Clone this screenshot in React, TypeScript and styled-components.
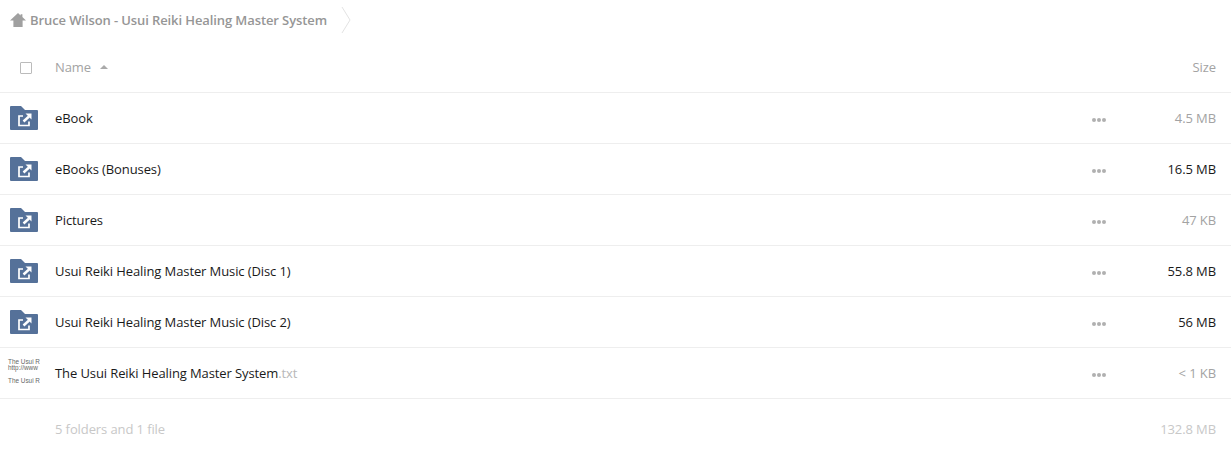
import React from "react";
import styled, { createGlobalStyle } from "styled-components";

const GlobalStyle = createGlobalStyle`
  html, body {
    margin: 0;
    padding: 0;
    background: #fff;
    font-family: "Open Sans", "Liberation Sans", sans-serif;
    font-size: 13px;
    letter-spacing: -0.1px;
  }
`;

type Item = {
  name: string;
  ext?: string;
  size: string;
  muted?: boolean;
};

const items: Item[] = [
  { name: "eBook", size: "4.5 MB", muted: true },
  { name: "eBooks (Bonuses)", size: "16.5 MB" },
  { name: "Pictures", size: "47 KB", muted: true },
  { name: "Usui Reiki Healing Master Music (Disc 1)", size: "55.8 MB" },
  { name: "Usui Reiki Healing Master Music (Disc 2)", size: "56 MB" },
  {
    name: "The Usui Reiki Healing Master System",
    ext: ".txt",
    size: "< 1 KB",
    muted: true,
  },
];

const HomeIcon = () => (
  <svg width="16" height="14" viewBox="0 0 16 14">
    <path
      d="M8 0 L10.6 2.4 V1.2 H12.4 V4.1 L16 7.6 H12.6 V14 H3.4 V7.6 H0 Z"
      fill="#a0a0a0"
    />
  </svg>
);

const SharedFolderIcon = () => (
  <svg width="28" height="24" viewBox="0 0 28 24">
    <path
      d="M1 0 H11 L15 4 H27 a1 1 0 0 1 1 1 V23 a1 1 0 0 1 -1 1 H1 a1 1 0 0 1 -1 -1 V1 a1 1 0 0 1 1 -1 Z"
      fill="#557199"
    />
    <path
      d="M13 10 H9 V19.5 H19 V15.5"
      fill="none"
      stroke="#fff"
      strokeWidth="1.7"
    />
    <path d="M13.5 15.5 L19 10.5" fill="none" stroke="#fff" strokeWidth="2.5" />
    <path d="M15.5 7.5 H21.5 V13.5 Z" fill="#fff" />
  </svg>
);

const App = () => {
  return (
    <Page>
      <GlobalStyle />
      <Breadcrumb>
        <HomeIcon />
        <CrumbLabel>Bruce Wilson - Usui Reiki Healing Master System</CrumbLabel>
        <CrumbChevron width="10" height="28" viewBox="0 0 10 28">
          <path d="M1 1 L9 14 L1 27" fill="none" stroke="#e3e3e3" />
        </CrumbChevron>
      </Breadcrumb>
      <HeaderRow>
        <CheckCell>
          <Checkbox />
        </CheckCell>
        <NameHeader>
          Name
          <SortArrow />
        </NameHeader>
        <SizeHeader>Size</SizeHeader>
      </HeaderRow>
      {items.map((item) => (
        <Row key={item.name}>
          <IconCell>
            {item.ext ? (
              <Thumb>
                <ThumbLine>The Usui R</ThumbLine>
                <ThumbLine>http://www</ThumbLine>
                <ThumbGap />
                <ThumbLine>The Usui R</ThumbLine>
              </Thumb>
            ) : (
              <SharedFolderIcon />
            )}
          </IconCell>
          <FileName>
            {item.name}
            {item.ext && <Extension>{item.ext}</Extension>}
          </FileName>
          <Actions>
            <Dot />
            <Dot />
            <Dot />
          </Actions>
          <FileSize $muted={item.muted}>{item.size}</FileSize>
        </Row>
      ))}
      <Summary>
        <span>5 folders and 1 file</span>
        <span>132.8 MB</span>
      </Summary>
    </Page>
  );
};

const Page = styled.div`
  width: 1231px;
  height: 464px;
  overflow: hidden;
  display: flex;
  flex-direction: column;
`;
const Breadcrumb = styled.div`
  height: 40px;
  padding-left: 10px;
  display: flex;
  align-items: center;
`;
const CrumbLabel = styled.span`
  margin-left: 4px;
  color: #969696;
  font-weight: 600;
  font-size: 13px;
`;
const CrumbChevron = styled.svg`
  margin-left: 14px;
`;
const HeaderRow = styled.div`
  height: 53px;
  padding-top: 2px;
  box-sizing: border-box;
  border-bottom: 1px solid #eee;
  display: flex;
  align-items: center;
  color: #a3a3a3;
`;
const CheckCell = styled.div`
  width: 55px;
  padding: 2px 0 0 20px;
  box-sizing: border-box;
  display: flex;
  align-items: center;
`;
const Checkbox = styled.div`
  width: 10px;
  height: 10px;
  border: 1px solid #bbb;
  border-radius: 1px;
`;
const NameHeader = styled.div`
  flex: 1;
  display: flex;
  align-items: center;
`;
const SortArrow = styled.span`
  margin-left: 9px;
  width: 0;
  height: 0;
  border-left: 4px solid transparent;
  border-right: 4px solid transparent;
  border-bottom: 4px solid #aaa;
`;
const SizeHeader = styled.div`
  padding-right: 15px;
`;
const Row = styled.div`
  height: 51px;
  box-sizing: border-box;
  border-bottom: 1px solid #eee;
  display: flex;
  align-items: center;
  color: #1a1a1a;
`;
const IconCell = styled.div`
  width: 55px;
  padding-left: 10px;
  box-sizing: border-box;
  display: flex;
  align-items: center;
`;
const Thumb = styled.div`
  width: 32px;
  margin-left: -2px;
  margin-bottom: 4px;
  font-family: "Liberation Sans", sans-serif;
  font-size: 6.4px;
  line-height: 6px;
  letter-spacing: 0;
  color: #666;
  white-space: nowrap;
`;
const ThumbLine = styled.div``;
const ThumbGap = styled.div`
  height: 7px;
`;
const FileName = styled.div`
  flex: 1;
`;
const Extension = styled.span`
  color: #b8b8b8;
`;
const Actions = styled.div`
  display: flex;
  gap: 1px;
  margin-top: 3px;
`;
const Dot = styled.span`
  width: 4px;
  height: 4px;
  border-radius: 50%;
  background: #b0b0b0;
`;
const FileSize = styled.div<{ $muted?: boolean }>`
  width: 125px;
  padding-right: 15px;
  box-sizing: border-box;
  text-align: right;
  color: ${(p) => (p.$muted ? "#a3a3a3" : "#1a1a1a")};
`;
const Summary = styled.div`
  height: 59px;
  padding: 0 15px 0 55px;
  display: flex;
  align-items: center;
  justify-content: space-between;
  color: #c8c8c8;
`;

export default App;
